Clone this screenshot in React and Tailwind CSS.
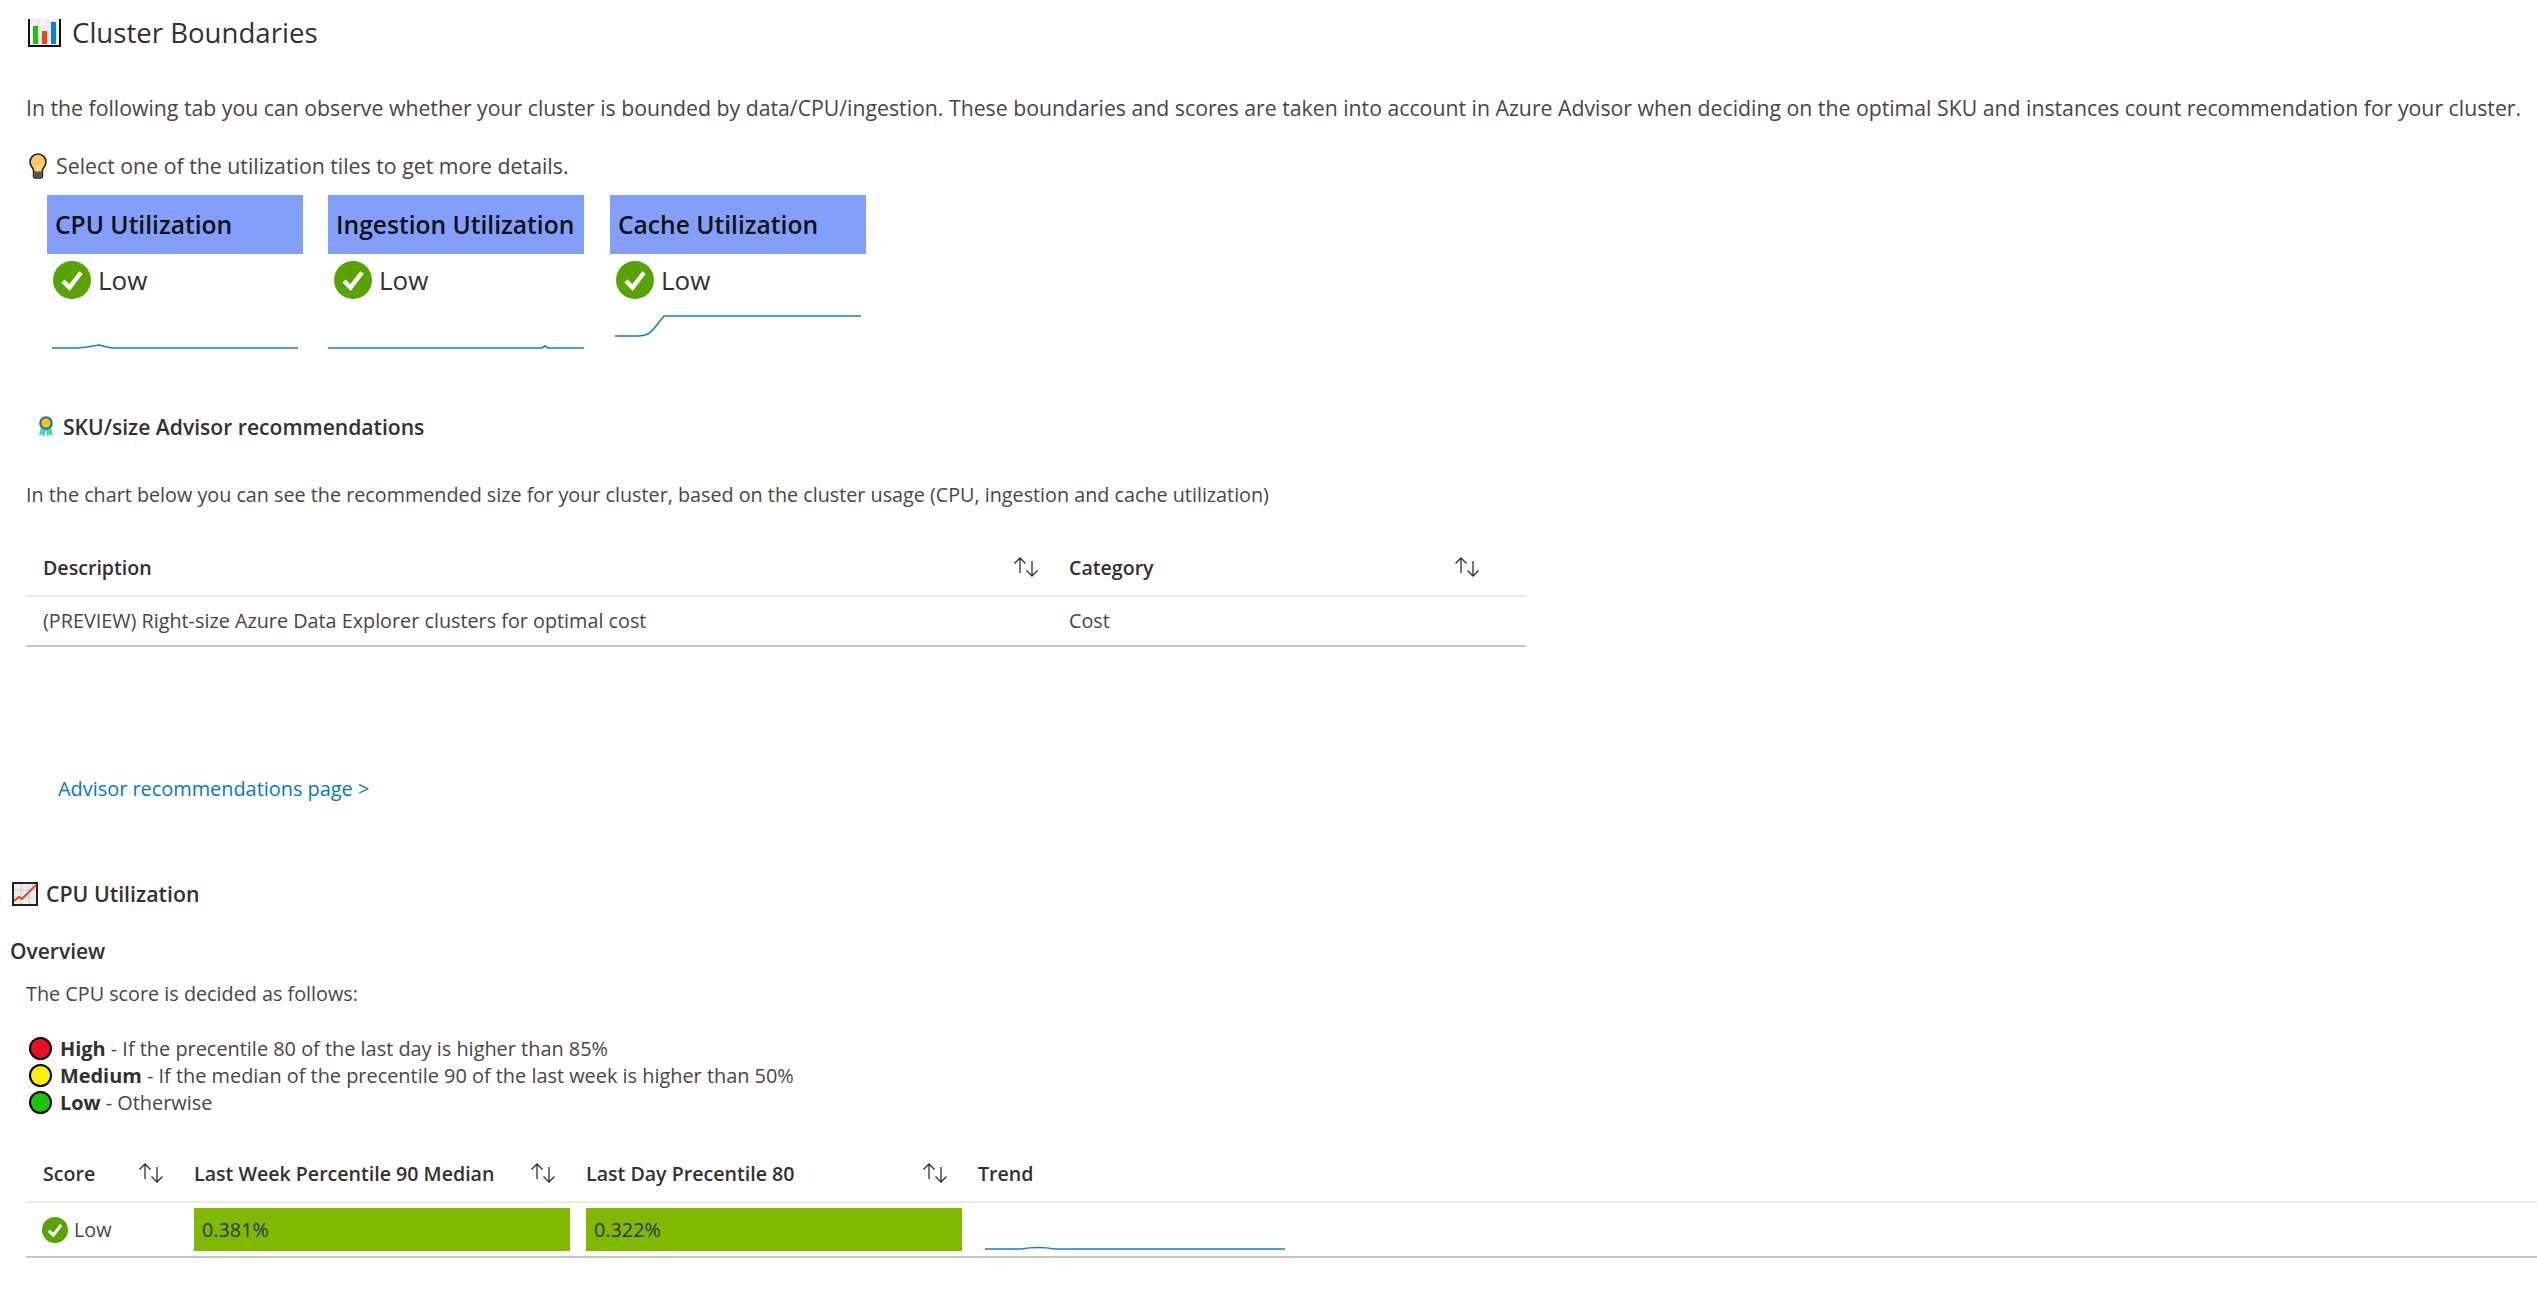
import React from 'react';

const font = { fontFamily: '"Open Sans", "Noto Sans", sans-serif' };

const ChartIcon = () => (
  <svg width="33" height="28" viewBox="0 0 33 28" className="shrink-0">
    <rect x="3" y="0" width="27" height="25" fill="#f2f2f2" />
    <path d="M11 0v25M20 0v25M3 8h27M3 16h27" stroke="#dedede" strokeWidth="1" />
    <path d="M1 0v27h31V0" fill="none" stroke="#111" strokeWidth="2" />
    <rect x="5" y="7" width="5" height="18" fill="#16c60c" />
    <rect x="14" y="12" width="5" height="13" fill="#f7401c" />
    <rect x="23" y="3" width="5" height="22" fill="#0f7ddb" />
  </svg>
);

const BulbIcon = () => (
  <svg width="18" height="26" viewBox="0 0 18 26" className="shrink-0">
    <path d="M9 1a8 8 0 0 0-8 8c0 3.400 2.600 5.400 3.600 8.400V23a2 2 0 0 0 2 2h4.800a2 2 0 0 0 2-2v-5.600C14.400 14.400 17 12.400 17 9a8 8 0 0 0-8-8z" fill="#ffc85c" stroke="#222" strokeWidth="1.600" />
    <path d="M5.500 18.500h7v4.500a1 1 0 0 1-1 1h-5a1 1 0 0 1-1-1z" fill="#555" />
    <path d="M6.500 12l2.500 6 2.500-6" fill="#ffe9a8" />
  </svg>
);

const RibbonIcon = () => (
  <svg width="16" height="22" viewBox="0 0 16 22" className="shrink-0">
    <path d="M3 10L1 20l3.500-1.500L6.500 21 8 14l1.500 7 2-2.500L15 20l-2-10z" fill="#40dcbc" />
    <circle cx="8" cy="7" r="6.800" fill="#1f6fc4" />
    <circle cx="8" cy="7" r="4.600" fill="#ffc400" />
  </svg>
);

const LineChartIcon = () => (
  <svg width="26" height="24" viewBox="0 0 26 24" className="shrink-0">
    <rect x="1" y="1" width="24" height="22" fill="#eeeeee" stroke="#222" strokeWidth="2" />
    <path d="M9 2v20M17 2v20M2 8h22M2 15h22" stroke="#cfcfcf" strokeWidth="1" />
    <path d="M2 19l5-4 3 2 6-6 8-8" fill="none" stroke="#f0411c" strokeWidth="2" />
  </svg>
);

const CheckIcon = ({ size }) => (
  <svg width={size} height={size} viewBox="0 0 38 38" className="shrink-0">
    <circle cx="19" cy="19" r="19" fill="#57a300" />
    <path d="M10 20l6.500 6.500L28 11.500" fill="none" stroke="#fff" strokeWidth="4.500" />
  </svg>
);

const SortIcon = () => (
  <svg width="28" height="22" viewBox="0 0 28 22" className="shrink-0">
    <path d="M8 17V2M2.500 7.500L8 2l5.500 5.500M20 5v15M14.500 14.500L20 20l5.500-5.500" fill="none" stroke="#323130" strokeWidth="1.300" />
  </svg>
);

const Dot = ({ color }) => (
  <span className="h-[23px] w-[23px] shrink-0 rounded-full border-2 border-black" style={{ backgroundColor: color }} />
);

const tiles = [
  { title: 'CPU Utilization', line: 'M5 34H30L40 33L52 31L60 33L66 34H251', cls: '' },
  { title: 'Ingestion Utilization', line: 'M0 34H214L217 32L220 34H256', cls: '' },
  { title: 'Cache Utilization', line: 'M5 22H28C36 22 40 20 46 12L54 2H251', cls: 'ml-px' },
];

const Tile = ({ title, line, cls }) => (
  <div className={`w-[256px] ${cls}`}>
    <div className="flex h-[59px] items-center whitespace-nowrap bg-[#829ffb] pl-[8px] pt-[2px] text-[24.6px] font-semibold text-[#111]">{title}</div>
    <div className="mt-[7px] flex h-[38px] items-center gap-[7px] pl-[6px] text-[26px] text-[#323130]">
      <CheckIcon size={38} />
      <span>Low</span>
    </div>
    <svg width="256" height="36" viewBox="0 0 256 36" className="mt-[15px] block">
      <path d={line} fill="none" stroke="#0f7fd6" strokeWidth="1.600" />
    </svg>
  </div>
);

const Legend = ({ color, name, text }) => (
  <div className="flex h-[27px] items-center gap-[8px] pl-[29px] text-[19.9px]">
    <Dot color={color} />
    <span><b className="font-bold text-[#323130]">{name}</b> - {text}</span>
  </div>
);

const HeaderCell = ({ label, className }) => (
  <div className={`flex items-center justify-between pr-px font-semibold text-[#323130] ${className}`}>
    <span>{label}</span>
    <SortIcon />
  </div>
);

export default function App() {
  return (
    <div className="min-h-[1305px] bg-white text-[19.6px] text-[#484644]" style={font}>
      <div className="flex h-[66px] items-center gap-[11px] pl-[28px] text-[27.6px] text-[#323130]">
        <ChartIcon />
        <span>Cluster Boundaries</span>
      </div>
      <div className="flex h-[80px] items-center whitespace-nowrap pl-[26px] pt-[3px] text-[21.25px]">
        In the following tab you can observe whether your cluster is bounded by data/CPU/ingestion. These boundaries and scores are taken into account in Azure Advisor when deciding on the optimal SKU and instances count recommendation for your cluster.
      </div>
      <div className="flex h-[40px] items-center gap-[9px] pl-[29px] text-[21.3px]">
        <BulbIcon />
        <span>Select one of the utilization tiles to get more details.</span>
      </div>

      <div className="mt-[9px] flex h-[155px] gap-[25px] pl-[47px]">
        {tiles.map((t) => <Tile key={t.title} {...t} />)}
      </div>

      <div className="mt-[57px] flex h-[40px] items-center gap-[9px] pl-[38px] text-[21.1px] font-semibold text-[#323130]">
        <RibbonIcon />
        <span>SKU/size Advisor recommendations</span>
      </div>
      <div className="mt-[28px] flex h-[40px] items-center pl-[26px] text-[19.75px]">
        In the chart below you can see the recommended size for your cluster, based on the cluster usage (CPU, ingestion and cache utilization)
      </div>

      <div className="ml-[26px] mt-[25px] w-[1500px]">
        <div className="flex h-[57px] items-center border-b-2 border-[#edebe9] pl-[17px]">
          <HeaderCell label="Description" className="w-[998px]" />
          <HeaderCell label="Category" className="ml-[28px] w-[413px]" />
        </div>
        <div className="flex h-[50px] items-center border-b-2 border-[#c8c6c4] pl-[17px] text-[19.8px]">
          <div className="w-[998px]">(PREVIEW) Right-size Azure Data Explorer clusters for optimal cost</div>
          <div className="ml-[28px]">Cost</div>
        </div>
      </div>

      <div className="mt-[122px] flex h-[40px] items-center pl-[58px] text-[19.9px]">
        <a href="#advisor" className="text-[#0078d4]">Advisor recommendations page &gt;</a>
      </div>

      <div className="mt-[65px] flex h-[40px] items-center gap-[8px] pl-[12px] text-[21.3px] font-semibold text-[#323130]">
        <LineChartIcon />
        <span>CPU Utilization</span>
      </div>
      <div className="mt-[18px] flex h-[40px] items-center pl-[10px] text-[21px] font-semibold text-[#323130]">Overview</div>
      <div className="mt-[2px] flex h-[40px] items-center pl-[26px] text-[19.8px]">The CPU score is decided as follows:</div>

      <div className="mt-[21px]">
        <Legend color="#e81123" name="High" text="If the precentile 80 of the last day is higher than 85%" />
        <Legend color="#fff100" name="Medium" text="If the median of the precentile 90 of the last week is higher than 50%" />
        <Legend color="#16c60c" name="Low" text="Otherwise" />
      </div>

      <div className="ml-[26px] mt-[30px]">
        <div className="flex h-[57px] items-center border-b-2 border-[#edebe9] pl-[17px]">
          <HeaderCell label="Score" className="w-[123px]" />
          <HeaderCell label="Last Week Percentile 90 Median" className="ml-[28px] w-[364px]" />
          <HeaderCell label="Last Day Precentile 80" className="ml-[28px] w-[364px]" />
          <div className="ml-[28px] font-semibold text-[#323130]">Trend</div>
        </div>
        <div className="flex h-[55px] items-start border-b-2 border-[#c8c6c4] pl-[16px] pt-[5px] text-[19.8px]">
          <div className="flex h-[43px] w-[152px] items-center gap-[6px]">
            <CheckIcon size={26} />
            <span>Low</span>
          </div>
          <div className="flex h-[43px] w-[376px] items-center bg-[#7fba00] pl-[8px] text-[#323130]">0.381%</div>
          <div className="ml-[16px] flex h-[43px] w-[376px] items-center bg-[#7fba00] pl-[8px] text-[#323130]">0.322%</div>
          <svg width="300" height="43" viewBox="0 0 300 43" className="ml-[23px]">
            <path d="M0 41H36Q53 38 70 41H300" fill="none" stroke="#0f7fd6" strokeWidth="1.600" />
          </svg>
        </div>
      </div>
    </div>
  );
}
